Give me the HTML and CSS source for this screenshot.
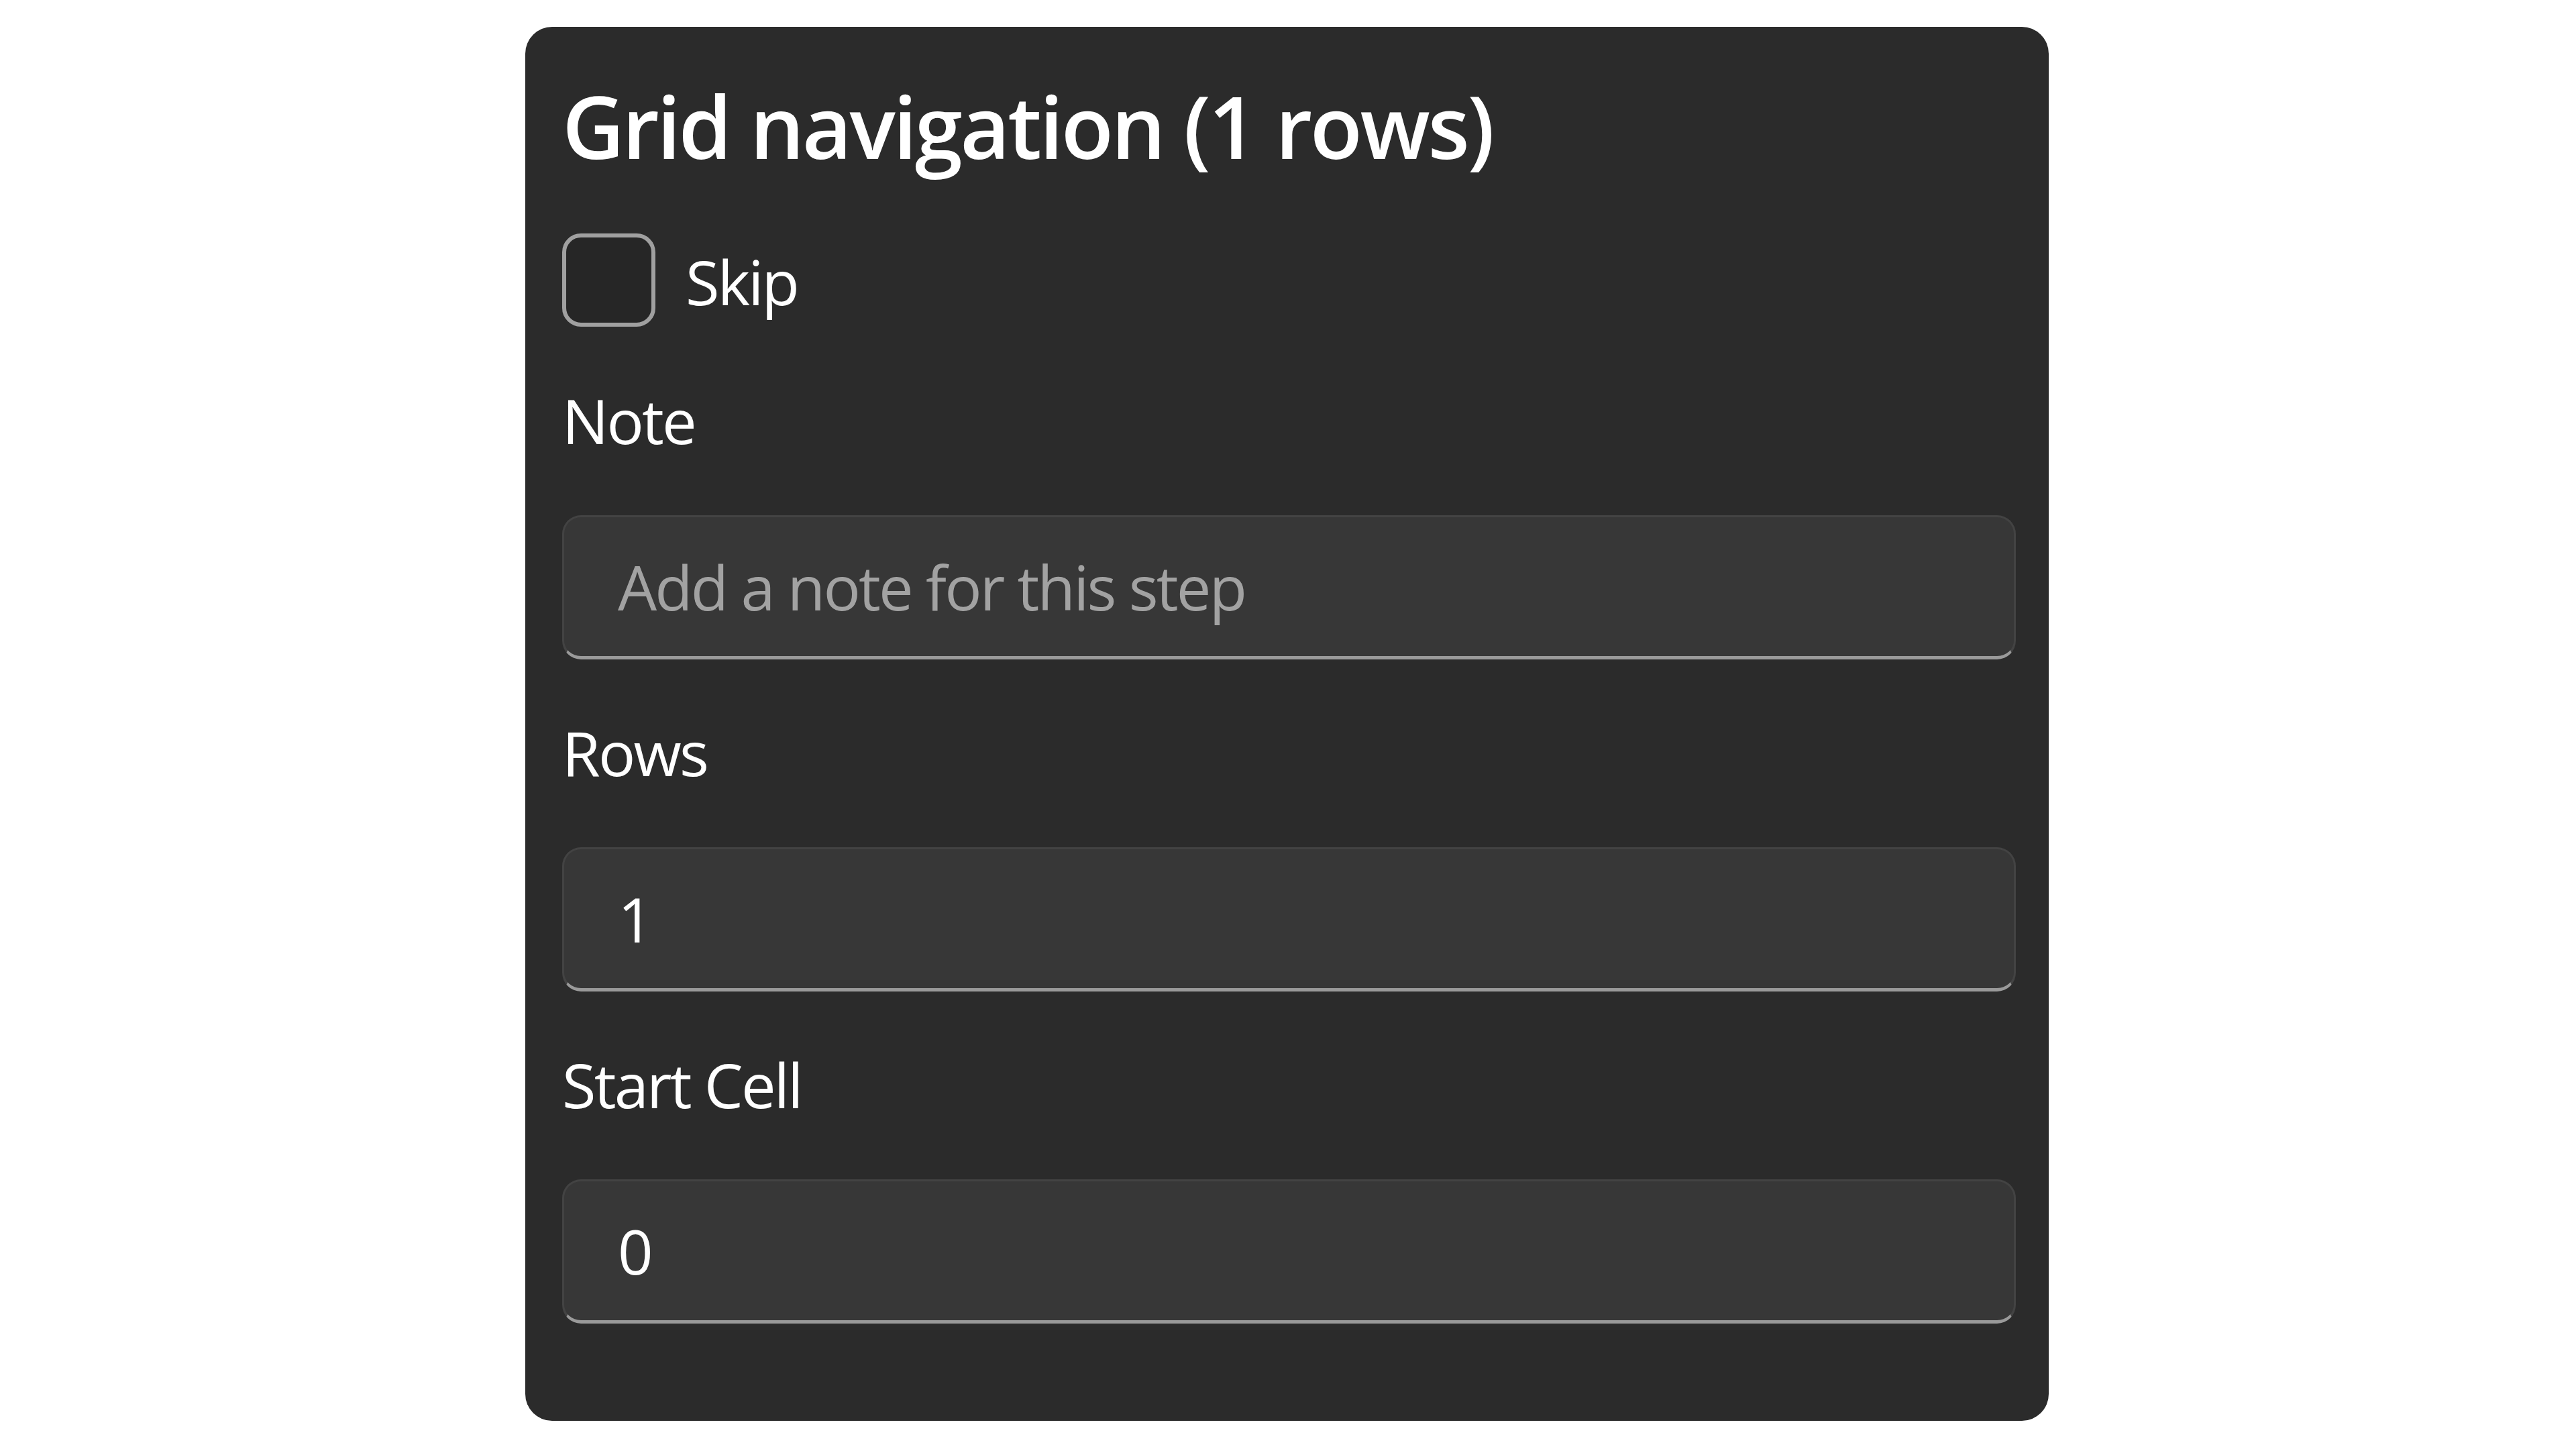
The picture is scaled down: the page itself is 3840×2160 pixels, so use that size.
FILE: index.html
```html
<!DOCTYPE html>
<html lang="en">
<head>
<meta charset="utf-8">
<title>Grid navigation</title>
<link rel="stylesheet" href="styles.css">
</head>
<body>
  <section class="panel">
    <h2 class="title">Grid navigation (1 rows)</h2>
    <label class="check-row">
      <input type="checkbox" class="check">
      <span class="check-label">Skip</span>
    </label>
    <div class="field">
      <label class="field-label" for="note">Note</label>
      <input id="note" class="textbox" type="text" placeholder="Add a note for this step">
    </div>
    <div class="field">
      <label class="field-label" for="rows">Rows</label>
      <input id="rows" class="textbox" type="text" value="1">
    </div>
    <div class="field">
      <label class="field-label" for="start">Start Cell</label>
      <input id="start" class="textbox" type="text" value="0">
    </div>
  </section>
</body>
</html>
```

FILE: styles.css
```css
html, body {
  margin: 0;
  padding: 0;
  background: #ffffff;
}

body {
  font-family: "Open Sans", "Noto Sans", sans-serif;
  color: #ffffff;
  padding: 40px 0 0 783px;
}

.panel {
  box-sizing: border-box;
  width: 2271px;
  height: 2078px;
  background: #2b2b2b;
  border-radius: 40px;
  padding: 63px 49px 0 55px;
  display: flex;
  flex-direction: column;
}

.title {
  margin: 0;
  font-size: 128px;
  line-height: 170px;
  font-weight: 600;
  letter-spacing: -3.4px;
  color: #ffffff;
}

.check-row {
  display: flex;
  align-items: center;
  gap: 45px;
  height: 139px;
  margin-top: 75px;
}

.check {
  appearance: none;
  -webkit-appearance: none;
  box-sizing: border-box;
  margin: 0;
  width: 139px;
  height: 139px;
  border: 6px solid #a0a0a0;
  border-radius: 28px;
  background: #262626;
}

.check-label {
  padding-top: 4px;
}

.check-label,
.field-label {
  font-size: 92px;
  line-height: 128px;
  letter-spacing: -2.8px;
  color: #ffffff;
}

.field {
  display: flex;
  flex-direction: column;
  margin-top: 76px;
}

.field + .field {
  margin-top: 75px;
}

.textbox {
  box-sizing: border-box;
  margin-top: 77px;
  width: 2167px;
  height: 215px;
  padding: 0 80px;
  background: #373737;
  border: 3px solid #434343;
  border-bottom: 5px solid #9a9a9a;
  border-radius: 28px;
  font-family: "Open Sans", "Noto Sans", sans-serif;
  font-size: 92px;
  letter-spacing: -2.8px;
  color: #ffffff;
  outline: none;
}

.textbox::placeholder {
  color: #a2a2a2;
  opacity: 1;
}
```
